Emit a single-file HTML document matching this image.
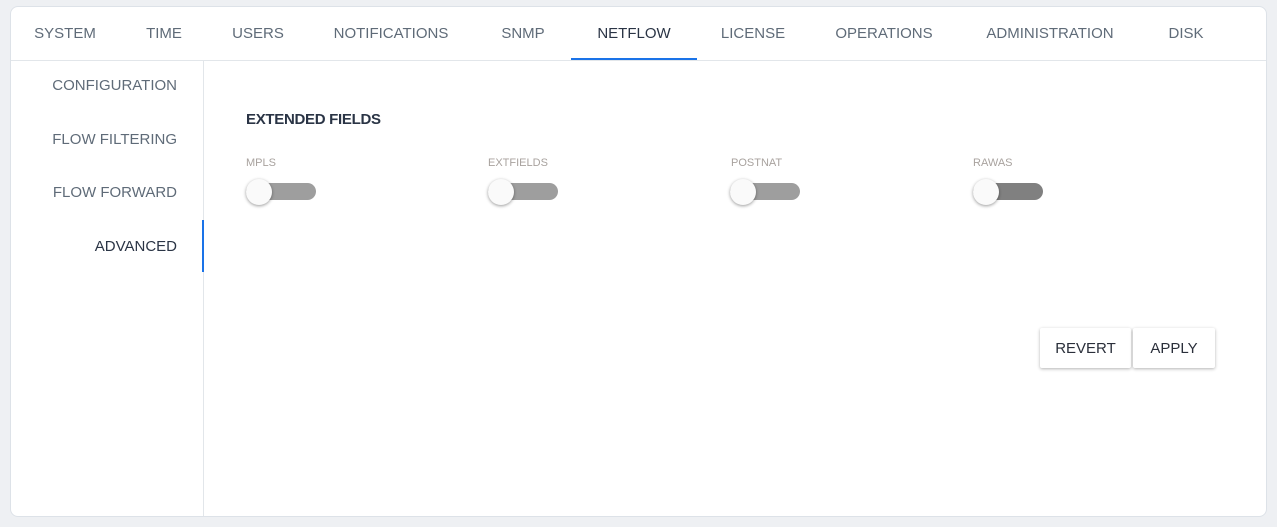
<!DOCTYPE html>
<html><head><style>
body{margin:0;width:1277px;height:527px;background:#eef0f3;font-family:"Liberation Sans",sans-serif;position:relative;overflow:hidden}
.card{position:absolute;left:10px;top:6px;width:1257px;height:511px;background:#fff;border:1px solid #dde2e8;border-radius:8px;box-sizing:border-box}
.t{position:absolute;top:25px;font-size:15px;color:#5f6b78;transform:translateX(-50%);white-space:nowrap}
.s{position:absolute;right:1100px;font-size:15px;color:#5f6b78;white-space:nowrap}
.lbl{position:absolute;top:157px;font-size:11px;color:#a8a29e}
.trk{position:absolute;top:183px;width:70px;height:17px;border-radius:9px;background:#9e9e9e}
.th{position:absolute;top:179px;width:26px;height:26px;border-radius:50%;background:#fafafa;box-shadow:0 1px 3px rgba(0,0,0,.4)}
.btn{position:absolute;top:328px;height:40px;background:#fff;box-shadow:0 1px 3px rgba(0,0,0,.3);font-size:15px;color:#2a2f3a;display:flex;align-items:center;justify-content:center;border-radius:2px}
</style></head><body>
<div class="card"></div>
<div style="position:absolute;left:11px;top:60px;width:1255px;height:1px;background:#e2e6ea"></div>
<div style="position:absolute;left:203px;top:61px;width:1px;height:455px;background:#e2e6ea"></div>
<div class="t" style="left:65px">SYSTEM</div>
<div class="t" style="left:164px">TIME</div>
<div class="t" style="left:258px">USERS</div>
<div class="t" style="left:391px">NOTIFICATIONS</div>
<div class="t" style="left:523px">SNMP</div>
<div class="t" style="left:634px;color:#2a3445">NETFLOW</div>
<div class="t" style="left:753px">LICENSE</div>
<div class="t" style="left:884px">OPERATIONS</div>
<div class="t" style="left:1050px">ADMINISTRATION</div>
<div class="t" style="left:1186px">DISK</div>
<div style="position:absolute;left:571px;top:58px;width:126px;height:2px;background:#1a73e8"></div>
<div class="s" style="top:77px">CONFIGURATION</div>
<div class="s" style="top:131px">FLOW FILTERING</div>
<div class="s" style="top:184px">FLOW FORWARD</div>
<div class="s" style="top:238px;color:#2a3445">ADVANCED</div>
<div style="position:absolute;left:202px;top:220px;width:2px;height:52px;background:#1a73e8"></div>
<div style="position:absolute;left:246px;top:111px;font-size:15px;font-weight:bold;color:#2a3445;letter-spacing:-0.3px">EXTENDED FIELDS</div>
<div class="lbl" style="left:246px">MPLS</div>
<div class="lbl" style="left:488px">EXTFIELDS</div>
<div class="lbl" style="left:731px">POSTNAT</div>
<div class="lbl" style="left:973px">RAWAS</div>
<div class="trk" style="left:246px"></div><div class="th" style="left:246px"></div>
<div class="trk" style="left:488px"></div><div class="th" style="left:488px"></div>
<div class="trk" style="left:730px"></div><div class="th" style="left:730px"></div>
<div class="trk" style="left:973px;background:#808080"></div><div class="th" style="left:973px"></div>
<div class="btn" style="left:1040px;width:91px">REVERT</div>
<div class="btn" style="left:1133px;width:82px">APPLY</div>
</body></html>
